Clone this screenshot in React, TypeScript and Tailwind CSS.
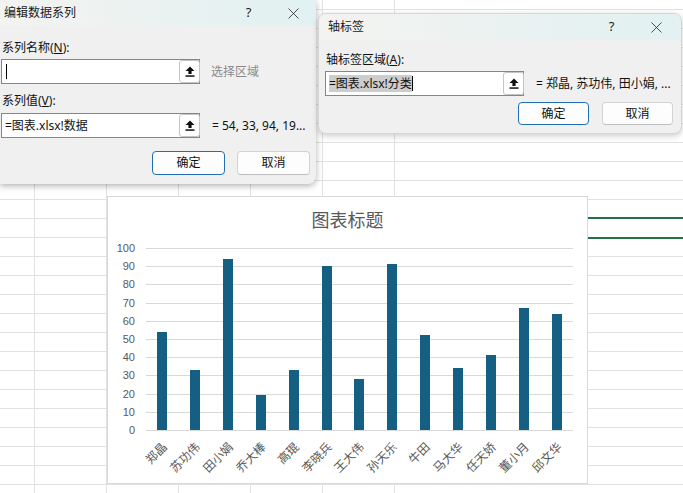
import React from 'react';
import { X } from 'lucide-react';

const names = ['郑晶', '苏功伟', '田小娟', '乔大棒', '高琨', '李晓兵', '王大伟', '孙天乐', '牛田', '马大华', '任天娇', '董小月', '邱文华'];
const values = [54, 33, 94, 19, 33, 90, 28, 91, 52, 34, 41, 67, 64];
const ticks = [100, 90, 80, 70, 60, 50, 40, 30, 20, 10, 0];
const PLOT_H = 182;

// one spreadsheet row: partial first column, five 72px columns, then a wide one
const SheetRow: React.FC<{ tall?: boolean }> = ({ tall = true }) => (
  <div className={`flex border-b border-[#e1e1e1] ${tall ? 'h-[19px]' : 'h-[10px]'}`}>
    <div className="w-[35px] border-r border-[#e1e1e1]" />
    {[0, 1, 2, 3, 4].map((i) => (
      <div key={i} className="w-[72px] border-r border-[#e1e1e1]" />
    ))}
    <div className="flex-1" />
  </div>
);

const UploadGlyph: React.FC = () => (
  <svg width="10" height="11" viewBox="0 0 10 11">
    <polygon points="5,0.5 9.5,5 6.6,5 6.6,8 3.4,8 3.4,5 0.5,5" fill="#111" />
    <rect x="0.5" y="9.3" width="9" height="1.5" fill="#111" />
  </svg>
);

const RefInput: React.FC<{ children?: React.ReactNode }> = ({ children }) => (
  <div className="flex h-[25px] w-[199px] items-center border border-[#868686] bg-white">
    <div className="flex flex-1 items-center pl-[3px] text-[12px] text-[#111]">{children}</div>
    <button className="-mr-px flex h-[23px] w-[21px] items-center justify-center rounded-[3px] border border-[#c4c4c4] bg-white">
      <UploadGlyph />
    </button>
  </div>
);

const TitleBar: React.FC<{ title: string; pad: string }> = ({ title, pad }) => (
  <div className={`flex h-[26px] items-center bg-gradient-to-r from-[#f3f3f0] to-[#e2f1f2] text-[12px] text-[#1a1a1a] ${pad}`}>
    <span className="flex-1">{title}</span>
    <span className="w-[45px] text-center text-[13px]">?</span>
    <span className="flex w-[45px] justify-center">
      <X size={19} strokeWidth={1} color="#222" />
    </span>
  </div>
);

const DialogButtons: React.FC<{ gap: string; pr: string; h: string; w: string }> = ({ gap, pr, h, w }) => (
  <div className={`flex justify-end ${gap} ${pr}`}>
    <button className={`${h} ${w} rounded-[4px] border border-[#1f6fb2] bg-[#fdfdfd] text-[12px] text-[#111]`}>确定</button>
    <button className={`${h} ${w} rounded-[4px] border border-[#d2d2d2] border-b-[#bdbdbd] bg-[#fdfdfd] text-[12px] text-[#111]`}>取消</button>
  </div>
);

const EditSeriesDialog: React.FC = () => (
  <div className="absolute left-0 top-0 flex h-[184px] w-[316px] flex-col rounded-br-lg bg-[#f0f0f0] shadow-[0_2px_6px_rgba(0,0,0,0.3)]">
    <TitleBar title="编辑数据系列" pad="pl-[4px]" />
    <div className="pl-[1px]">
      <div className="mt-[14px] h-[16px] pl-[1px] text-[12px] leading-[16px] text-[#111]">
        系列名称(<span className="underline">N</span>):
      </div>
      <div className="mt-[3px] flex items-center">
        <RefInput>
          <span className="ml-px h-[15px] w-px bg-black" />
        </RefInput>
        <span className="ml-[11px] text-[12px] text-[#8a8a8a]">选择区域</span>
      </div>
      <div className="mt-[9px] h-[16px] pl-[1px] text-[12px] leading-[16px] text-[#111]">
        系列值(<span className="underline">V</span>):
      </div>
      <div className="mt-[4px] flex items-center">
        <RefInput>=图表.xlsx!数据</RefInput>
        <span className="ml-[12px] text-[12px] text-[#111]">= 54, 33, 94, 19...</span>
      </div>
      <div className="mt-[13px]">
        <DialogButtons gap="gap-[12px]" pr="pr-[6px]" h="h-[24px]" w="w-[73px]" />
      </div>
    </div>
  </div>
);

const AxisLabelDialog: React.FC = () => (
  <div className="absolute left-[318px] top-[13px] flex h-[121px] w-[364px] flex-col overflow-hidden rounded-lg border border-[#d6d6d6] bg-[#f0f0f0] shadow-[0_2px_6px_rgba(0,0,0,0.2)]">
    <TitleBar title="轴标签" pad="pl-[9px] pr-[2px]" />
    <div className="pl-[6px]">
      <div className="mt-[12px] h-[16px] pl-[1px] text-[12px] leading-[16px] text-[#111]">
        轴标签区域(<span className="underline">A</span>):
      </div>
      <div className="mt-[3px] flex items-center">
        <RefInput>
          <span className="bg-[#cdcdcd] leading-[17px]">=图表.xlsx!分类</span>
          <span className="h-[15px] w-px bg-black" />
        </RefInput>
        <span className="ml-[12px] whitespace-nowrap text-[12px] text-[#111]">= 郑晶, 苏功伟, 田小娟, ...</span>
      </div>
      <div className="mt-[6px]">
        <DialogButtons gap="gap-[13px]" pr="pr-[8px]" h="h-[23px]" w="w-[71px]" />
      </div>
    </div>
  </div>
);

const ChartObject: React.FC = () => (
  <div className="absolute left-[107px] top-[196px] h-[288px] w-[481px] border border-[#d9d9d9] bg-white font-['Liberation_Sans','Noto_Sans_CJK_SC',sans-serif] text-[#595959]">
    <div className="pt-[9px] text-center text-[18px] leading-[26px] font-['Noto_Sans_CJK_SC',sans-serif]">图表标题</div>
    <div className="mt-[16px] flex items-start">
      <div className="-mt-[7px] flex h-[196px] w-[27px] flex-col justify-between text-right text-[11px]">
        {ticks.map((t) => (
          <span key={t} className="h-[14px] leading-[14px]">{t}</span>
        ))}
      </div>
      <div className="ml-[11px] w-[427px]">
        <div className="relative flex h-[183px] flex-col border-b border-[#d9d9d9]">
          {ticks.slice(1).map((t) => (
            <div key={t} className="flex-1 border-t border-[#d9d9d9]" />
          ))}
          <div className="absolute inset-0 flex items-end">
            {values.map((v, i) => (
              <div key={i} className="flex flex-1 justify-center">
                <div className="w-[10px] bg-[#156082]" style={{ height: (v / 100) * PLOT_H }} />
              </div>
            ))}
          </div>
        </div>
        <div className="flex h-[50px]">
          {names.map((n) => (
            <div key={n} className="relative flex-1">
              <span className="absolute right-[calc(50%+2px)] top-[9px] origin-top-right -rotate-45 whitespace-nowrap text-[12px] leading-[12px] font-['Noto_Sans_CJK_SC',sans-serif]">
                {n}
              </span>
            </div>
          ))}
        </div>
      </div>
    </div>
  </div>
);

export default function App() {
  return (
    <div className="relative h-[493px] w-[683px] overflow-hidden bg-white font-['Noto_Sans','Noto_Sans_CJK_SC',sans-serif]">
      <div className="flex flex-col">
        <SheetRow tall={false} />
        {Array.from({ length: 26 }).map((_, i) => (
          <SheetRow key={i} />
        ))}
      </div>
      {/* selected range border, mostly hidden behind the chart */}
      <div className="absolute left-[394px] top-[217px] h-[22px] w-[289px] border-y-2 border-[#217346]" />
      <ChartObject />
      <EditSeriesDialog />
      <AxisLabelDialog />
    </div>
  );
}
